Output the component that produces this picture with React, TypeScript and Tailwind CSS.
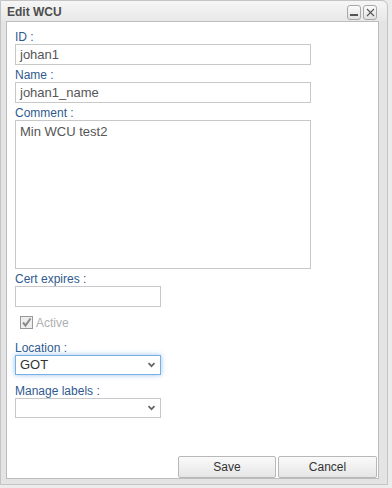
import React from "react";

const font = { fontFamily: '"Liberation Sans", Arial, sans-serif' };

function Label({ text }: { text: string }) {
  return <div className="text-[12px] leading-[14px] h-[14px] text-[#2f5a8f]">{text}</div>;
}

function Chevron() {
  return (
    <svg width="9" height="6" viewBox="0 0 9 6" className="text-[#666]">
      <path d="M1.5 1.2 L4.5 4.2 L7.5 1.2" fill="none" stroke="currentColor" strokeWidth="1.7" />
    </svg>
  );
}

export default function App() {
  return (
    <div className="w-[392px] h-[488px] bg-[#ececec] relative" style={font}>
      <div className="w-[388px] h-[485px] bg-[#e4e4e4] border border-[#c4c4c4] rounded-tr-[6px] flex flex-col">
        {/* title bar */}
        <div className="h-[20px] flex items-center justify-between pl-[6px] pr-[10px] bg-gradient-to-b from-[#f6f6f6] to-[#e8e8e8] rounded-tr-[6px]">
          <span className="text-[12px] font-bold text-[#4d4d4d] mt-[2px]">Edit WCU</span>
          <div className="flex gap-[2px] mt-[2px]">
            <div className="w-[14px] h-[15px] border border-[#a8a8a8] rounded-[3px] bg-gradient-to-b from-[#fbfbfb] to-[#e2e2e2] flex items-end justify-center pb-[3px]">
              <div className="w-[8px] h-[2px] bg-[#555]" />
            </div>
            <div className="w-[14px] h-[15px] border border-[#a8a8a8] rounded-[3px] bg-gradient-to-b from-[#fbfbfb] to-[#e2e2e2] flex items-center justify-center">
              <svg width="9" height="9" viewBox="0 0 9 9">
                <path d="M1 1 L8 8 M8 1 L1 8" stroke="#555" strokeWidth="1.1" />
              </svg>
            </div>
          </div>
        </div>
        {/* body */}
        <div className="flex-1 pl-[5px] pr-[8px] pb-[5px]">
          <div className="h-full bg-white border border-[#bdbdbd] flex flex-col pl-[8px] pt-[8px]">
            <Label text="ID :" />
            <div className="w-[296px] h-[21px] border border-[#c8c8c8] text-[13px] text-[#555] px-[4px] leading-[19px]">johan1</div>
            <div className="h-[3px]" />
            <Label text="Name :" />
            <div className="w-[296px] h-[21px] border border-[#c8c8c8] text-[13px] text-[#555] px-[4px] leading-[19px]">johan1_name</div>
            <div className="h-[3px]" />
            <Label text="Comment :" />
            <div className="w-[296px] h-[149px] border border-[#c8c8c8] text-[13px] text-[#555] px-[4px] pt-[1px] leading-[19px]">Min WCU test2</div>
            <div className="h-[3px]" />
            <Label text="Cert expires :" />
            <div className="w-[146px] h-[21px] border border-[#c8c8c8]" />
            <div className="flex items-center gap-[3px] ml-[5px] mt-[9px] h-[13px]">
              <div className="w-[13px] h-[13px] border border-[#999] bg-[#eee] flex items-center justify-center">
                <svg width="11" height="11" viewBox="0 0 11 11">
                  <path d="M2 5.5 L4.5 8.5 L9.5 1.5" fill="none" stroke="#8a8a8a" strokeWidth="2" />
                </svg>
              </div>
              <span className="text-[12px] text-[#b0b0b0]">Active</span>
            </div>
            <div className="h-[12px]" />
            <Label text="Location :" />
            <div className="w-[146px] h-[20px] border border-[#79b0e2] shadow-[0_0_5px_rgba(90,155,230,0.6)] flex items-center justify-between px-[4px]">
              <span className="text-[13px] text-[#333]">GOT</span>
              <Chevron />
            </div>
            <div className="h-[9px]" />
            <Label text="Manage labels :" />
            <div className="w-[146px] h-[20px] border border-[#c8c8c8] flex items-center justify-end px-[4px]">
              <Chevron />
            </div>
            <div className="flex-1" />
            <div className="flex justify-end gap-[2px] pr-[1px]">
              <button className="w-[98px] h-[22px] border border-[#b8b8b8] rounded-[2px] bg-gradient-to-b from-[#fafafa] to-[#e6e6e6] text-[12px] text-[#333]">Save</button>
              <button className="w-[99px] h-[22px] border border-[#b8b8b8] rounded-[2px] bg-gradient-to-b from-[#fafafa] to-[#e6e6e6] text-[12px] text-[#333]">Cancel</button>
            </div>
          </div>
        </div>
      </div>
    </div>
  );
}
